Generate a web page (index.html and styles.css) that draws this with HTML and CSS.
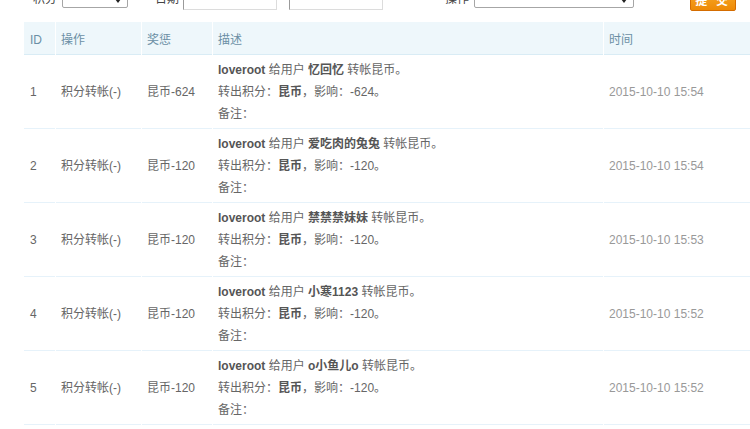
FILE: index.html
```html
<!DOCTYPE html>
<html lang="zh-CN">
<head>
<meta charset="utf-8">
<title>积分记录</title>
<link rel="stylesheet" href="styles.css">
</head>
<body>
<div class="page">
  <form class="filter">
    <label class="lbl">积分</label>
    <span class="sel sel-sm"></span>
    <label class="lbl lbl-date">日期</label>
    <input class="txt" type="text">
    <input class="txt txt-2" type="text">
    <label class="lbl lbl-op">操作</label>
    <span class="sel sel-lg"></span>
    <button class="btn" type="button">提 交</button>
  </form>

  <div class="table-wrap">
    <table class="log">
      <thead>
        <tr>
          <th class="c-id">ID</th>
          <th class="c-op">操作</th>
          <th class="c-amt">奖惩</th>
          <th class="c-desc">描述</th>
          <th class="c-time">时间</th>
        </tr>
      </thead>
      <tbody>
        <tr>
          <td class="c-id">1</td>
          <td>积分转帐(-)</td>
          <td>昆币-624</td>
          <td class="desc"><b>loveroot</b> 给用户 <b>忆回忆</b> 转帐昆币。<br>转出积分：<b>昆币</b>，影响：-624。<br>备注：</td>
          <td class="time">2015-10-10 15:54</td>
        </tr>
        <tr>
          <td class="c-id">2</td>
          <td>积分转帐(-)</td>
          <td>昆币-120</td>
          <td class="desc"><b>loveroot</b> 给用户 <b>爱吃肉的兔兔</b> 转帐昆币。<br>转出积分：<b>昆币</b>，影响：-120。<br>备注：</td>
          <td class="time">2015-10-10 15:54</td>
        </tr>
        <tr>
          <td class="c-id">3</td>
          <td>积分转帐(-)</td>
          <td>昆币-120</td>
          <td class="desc"><b>loveroot</b> 给用户 <b>禁禁禁妹妹</b> 转帐昆币。<br>转出积分：<b>昆币</b>，影响：-120。<br>备注：</td>
          <td class="time">2015-10-10 15:53</td>
        </tr>
        <tr>
          <td class="c-id">4</td>
          <td>积分转帐(-)</td>
          <td>昆币-120</td>
          <td class="desc"><b>loveroot</b> 给用户 <b>小寒1123</b> 转帐昆币。<br>转出积分：<b>昆币</b>，影响：-120。<br>备注：</td>
          <td class="time">2015-10-10 15:52</td>
        </tr>
        <tr>
          <td class="c-id">5</td>
          <td>积分转帐(-)</td>
          <td>昆币-120</td>
          <td class="desc"><b>loveroot</b> 给用户 <b>o小鱼儿o</b> 转帐昆币。<br>转出积分：<b>昆币</b>，影响：-120。<br>备注：</td>
          <td class="time">2015-10-10 15:52</td>
        </tr>
      </tbody>
    </table>
  </div>
</div>
</body>
</html>
```

FILE: styles.css
```css
html, body {
  margin: 0;
  padding: 0;
  background: #fff;
  overflow: hidden;
}

body {
  font-family: "Liberation Sans", "Noto Sans CJK SC", sans-serif;
  font-size: 12px;
  color: #666;
}

.page {
  width: 750px;
}

.filter {
  display: flex;
  align-items: center;
  height: 24px;
  margin: -13px 0 11px 0;
  padding-left: 33px;
}

.lbl {
  color: #444;
  font-size: 12px;
  line-height: 14px;
  margin-right: 5px;
}

.lbl-date {
  margin-left: 27px;
  margin-right: 4px;
}

.lbl-op {
  margin-left: 62px;
  margin-right: 5px;
}

.sel {
  position: relative;
  display: block;
  box-sizing: border-box;
  height: 21px;
  margin-top: -4px;
  border: 1px solid #a6a6a6;
  border-radius: 2px;
  background: #fff;
}

.sel::after {
  content: "";
  position: absolute;
  right: 6px;
  bottom: 4px;
  border-left: 3px solid transparent;
  border-right: 3px solid transparent;
  border-top: 4px solid #222;
}

.sel-sm {
  width: 66px;
}

.sel-lg {
  width: 160px;
}

.txt {
  display: block;
  box-sizing: border-box;
  width: 94px;
  height: 24px;
  margin: -2px 0 0 0;
  padding: 0;
  border: 1px solid #dcdcdc;
  border-top-color: #9a9a9a;
  border-left-color: #9a9a9a;
  background: #fff;
  outline: none;
}

.txt-2 {
  margin-left: 12px;
}

.btn {
  display: block;
  box-sizing: border-box;
  width: 46px;
  height: 23px;
  margin: 0 0 0 56px;
  padding: 0;
  border: 1px solid #d46c00;
  border-radius: 2px;
  background: linear-gradient(#f9ad2c, #ee8a06);
  color: #fff;
  font-family: "Noto Sans CJK SC", sans-serif;
  font-size: 12px;
  letter-spacing: 3px;
  font-weight: bold;
}

.table-wrap {
  padding-left: 23px;
  overflow: hidden;
}

.log {
  width: 782px;
  table-layout: fixed;
  border-collapse: separate;
  border-spacing: 1px 0;
}

.log th,
.log td {
  box-sizing: border-box;
  padding: 0 0 0 5px;
  text-align: left;
  vertical-align: middle;
  font-weight: normal;
}

.log th {
  height: 33px;
  padding-top: 4px;
  background: #eef7fb;
  border-bottom: 1px solid #d9ecf5;
  color: #6b8fa5;
  line-height: 22px;
}

.log td {
  padding-top: 4px;
  padding-bottom: 3px;
  line-height: 22px;
  border-bottom: 1px solid #e6f2fa;
}

.log .c-id {
  width: 31px;
  padding-left: 6px;
}

.log .c-op {
  width: 85px;
}

.log .c-amt {
  width: 70px;
}

.log .c-desc {
  width: 390px;
}

.log .c-time {
  width: 200px;
}

.log .desc b {
  color: #555;
  font-weight: bold;
}

.log .time {
  color: #999;
}
```
